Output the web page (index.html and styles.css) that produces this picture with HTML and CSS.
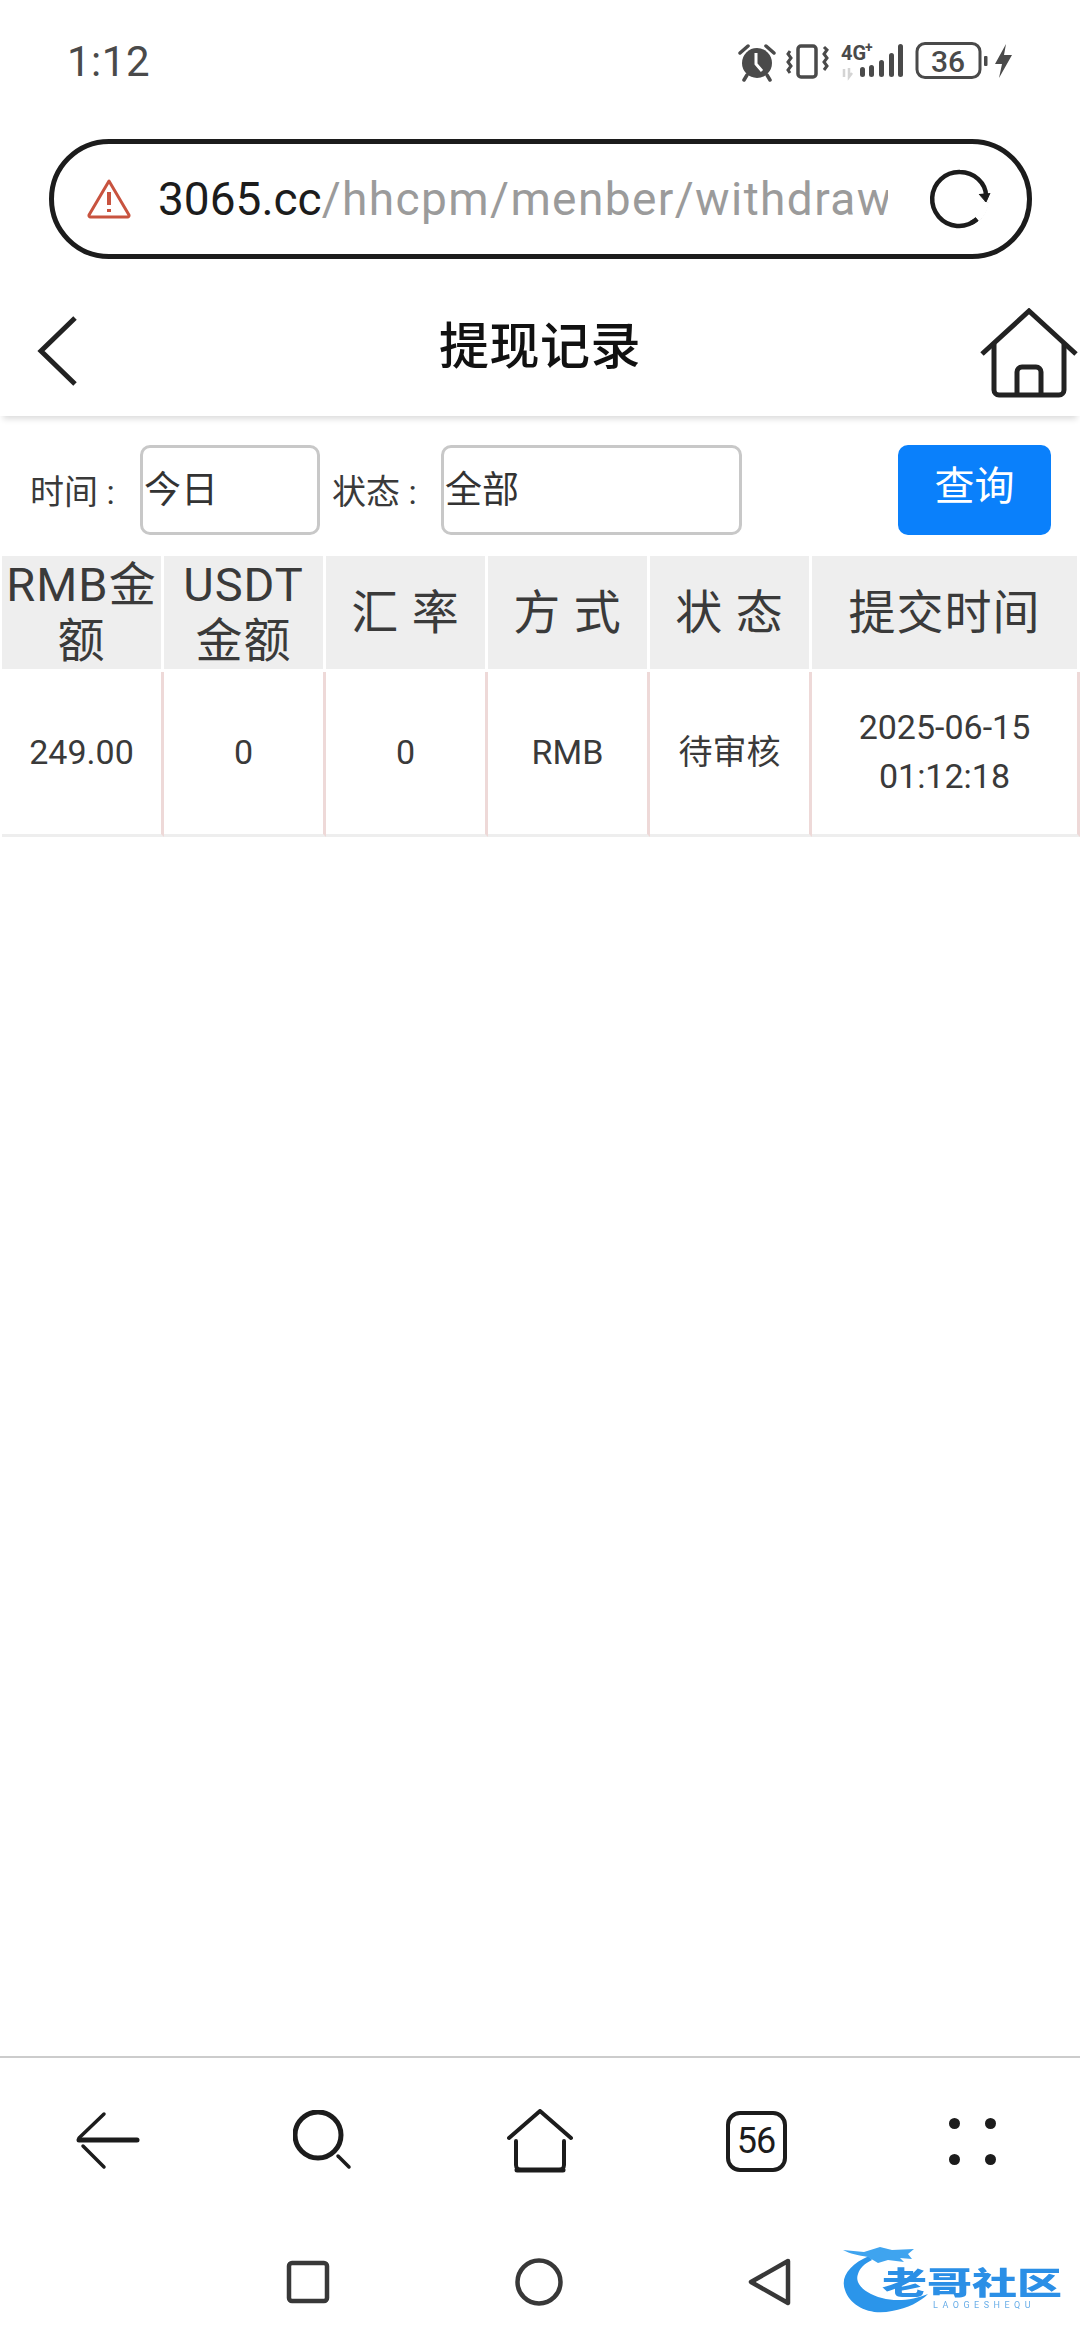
FILE: index.html
```html
<!DOCTYPE html>
<html lang="zh-CN">
<head>
<meta charset="utf-8">
<title>提现记录</title>
<link rel="stylesheet" href="styles.css">
</head>
<body>
<div class="phone">
  <div class="statusbar">
    <span class="time">1:12</span>
    <svg class="status-icons" width="282" height="40" viewBox="735 42 282 40">
      <g fill="#4a4a4a" stroke="#4a4a4a">
        <circle cx="757" cy="63" r="15" stroke="none"/>
        <path d="M740 53l8-7M774 53l-8-7M747 75l-3 5M767 75l3 5" fill="none" stroke-width="3.500" stroke-linecap="round"/>
        <path d="M756 53v11l6 7" fill="none" stroke="#fff" stroke-width="3"/>
        <rect x="798" y="46" width="18" height="31" rx="3" fill="none" stroke-width="3.500"/>
        <path d="M790 51l-2 3 3 4-3 4 3 4-3 4 2 3M824 47l3 3-3 4 3 4-3 4 3 4-3 4" fill="none" stroke-width="3"/>
        <path d="M844 69v8M849 68v9l3-4" fill="none" stroke="#d4d4d4" stroke-width="2.500"/>
        <rect x="860" y="67" width="5" height="10" rx="2.500" stroke="none"/>
        <rect x="869" y="65" width="5" height="12" rx="2.500" stroke="none"/>
        <rect x="879" y="60" width="5" height="17" rx="2.500" stroke="none"/>
        <rect x="889" y="53" width="5" height="24" rx="2.500" stroke="none"/>
        <rect x="898" y="44" width="5" height="33" rx="2.500" stroke="none"/>
        <rect x="917" y="43.500" width="63" height="34" rx="8" fill="none" stroke-width="3"/>
        <rect x="984" y="56" width="3.500" height="10" rx="1" stroke="none"/>
        <path d="M1006 44l-11 20h7l-3 14 13-23h-8z" stroke="none"/>
      </g>
      <text class="st-net" x="841" y="60">4G</text>
      <text class="st-plus" x="865" y="52">+</text>
      <text class="st-batt" x="948" y="72" text-anchor="middle">36</text>
    </svg>
  </div>

  <div class="urlrow">
    <div class="urlbar">
      <svg class="warn" width="46" height="42" viewBox="0 0 46 42" fill="none" stroke="#c8533f" stroke-width="3">
        <path d="M23 3L3 37a1.500 1.500 0 0 0 1.500 2h37a1.500 1.500 0 0 0 1.500-2z" stroke-linejoin="round"/>
        <path d="M23 14v13M23 31v3" stroke-width="4"/>
      </svg>
      <span class="url"><span class="url-host">3065.cc</span><span class="url-path">/hhcpm/menber/withdraw</span></span>
      <svg class="reload" width="62" height="62" viewBox="0 0 62 62" fill="none" stroke="#1c1c1c" stroke-width="4.500">
        <path d="M57 34A27 27 0 1 1 31 4c14 0 26 11 26 24"/>
        <path d="M50 26l7 8 4-9" fill="#1c1c1c" stroke-width="1"/>
        <path d="M57 34a27 27 0 0 1-9 17" stroke="#fff" stroke-width="6"/>
        <path d="M48 51a27 27 0 0 1-6 4"/>
      </svg>
    </div>
  </div>

  <header class="pagehead">
    <svg class="back" width="44" height="70" viewBox="0 0 44 70" fill="none" stroke="#222" stroke-width="5"><path d="M39 2L5 35l34 33"/></svg>
    <h1 class="title">提现记录</h1>
    <svg class="homeicon" width="98" height="90" viewBox="0 0 98 90" fill="none" stroke="#222" stroke-width="5">
      <path d="M2 46L49 3l47 43"/>
      <path d="M14 36v46a5 5 0 0 0 5 5h60a5 5 0 0 0 5-5V36"/>
      <path d="M37 87V64a5 5 0 0 1 5-5h14a5 5 0 0 1 5 5v23"/>
    </svg>
  </header>

  <main class="content">
    <form class="filters">
      <label class="flabel">时间 :</label>
      <div class="field field-time">今日</div>
      <label class="flabel flabel-2">状态 :</label>
      <div class="field field-state">全部</div>
      <button type="button" class="query">查询</button>
    </form>
    <div class="records">
      <div class="hcell">RMB金额</div>
      <div class="hcell">USDT金额</div>
      <div class="hcell">汇 率</div>
      <div class="hcell">方 式</div>
      <div class="hcell">状 态</div>
      <div class="hcell">提交时间</div>
      <div class="dcell">249.00</div>
      <div class="dcell">0</div>
      <div class="dcell">0</div>
      <div class="dcell">RMB</div>
      <div class="dcell">待审核</div>
      <div class="dcell">2025-06-15<br>01:12:18</div>
    </div>
  </main>

  <nav class="browsernav">
    <svg width="64" height="60" viewBox="0 0 64 60" fill="none" stroke="#1c1c1c" stroke-linecap="round"><path d="M3 29h58" stroke-width="5"/><path d="M28 3L3 27M28 56L7 35" stroke-width="3.500"/></svg>
    <svg width="62" height="62" viewBox="0 0 62 62" fill="none" stroke="#1c1c1c" stroke-linecap="round"><circle cx="25" cy="25" r="23" stroke-width="5"/><path d="M45 46l11 11" stroke-width="3.500"/></svg>
    <svg width="66" height="64" viewBox="0 0 66 64" fill="none" stroke="#1c1c1c" stroke-linecap="round" stroke-linejoin="round"><path d="M2 29L33 2l31 27" stroke-width="4"/><path d="M9 32v24a5 5 0 0 0 5 5h38a5 5 0 0 0 5-5V32" stroke-width="4"/><path d="M10 61h46" stroke-width="5"/></svg>
    <div class="tabs">56</div>
    <div class="dots"><i></i><i></i><i></i><i></i></div>
  </nav>

  <div class="sysnav">
    <svg width="44" height="44" viewBox="0 0 44 44" fill="none" stroke="#383838" stroke-width="4.500"><rect x="3" y="3" width="38" height="38" rx="3"/></svg>
    <svg width="48" height="48" viewBox="0 0 48 48" fill="none" stroke="#383838" stroke-width="4.500"><circle cx="24" cy="24" r="21.500"/></svg>
    <svg class="sys-back" width="44" height="48" viewBox="0 0 44 48" fill="none" stroke="#383838" stroke-width="4.500" stroke-linejoin="round"><path d="M40 3L3 24l37 21z"/></svg>
    <div class="logo">
      <svg class="dragon" width="130" height="76" viewBox="0 0 130 76" fill="none">
        <path d="M27 16C8 24-2 37 3 50c5 16 25 26 47 21 16-3 28-9 36-17-14 6-32 8-46 4C24 54 12 44 16 34c2-6 6-10 14-14z" fill="#2b95ea"/>
        <path d="M1 10l21 2 16-5 12 3 22-1-6 5 4 5-12-1 4 4-16-2-10 3-10-6C16 15 8 14 1 10z" fill="#3fa4ef"/>
      </svg>
      <span class="logo-cn">老哥社区</span>
      <span class="logo-en">LAOGESHEQU</span>
    </div>
  </div>
</div>
</body>
</html>
```

FILE: styles.css
```css
* { box-sizing: border-box; }
html, body { margin: 0; padding: 0; background: #fff; }
body { font-family: Roboto, "Noto Sans CJK SC", sans-serif; color: #333; }
.phone { width: 1080px; height: 2340px; display: flex; flex-direction: column; position: relative; overflow: hidden; }

.statusbar { height: 139px; padding: 0 65px 16px 67px; flex: none; display: flex; align-items: center; justify-content: space-between; }
.time { font-size: 42px; color: #4a4a4a; letter-spacing: 0.5px; }
.status-icons { display: block; margin-right: -2px; }
.st-net { font: 700 20px Roboto, sans-serif; fill: #4a4a4a; }
.st-plus { font: 700 14px Roboto, sans-serif; fill: #4a4a4a; }
.st-batt { font: 500 30px Roboto, sans-serif; fill: #4a4a4a; }

.urlrow { padding: 0 48px 0 49px; flex: none; }
.urlbar { height: 120px; border: 5px solid #1c1c1c; border-radius: 60px; display: flex; align-items: center; padding: 0 0 0 32px; }
.warn { flex: none; }
.url { font-size: 46px; color: #9b9b9b; margin-left: 26px; width: 730px; white-space: nowrap; overflow: hidden; flex: none; }
.url-host { color: #1c1c1c; }
.url-path { letter-spacing: 1.400px; }
.reload { margin-left: 41px; flex: none; }

.pagehead { height: 157px; flex: none; display: grid; grid-template-columns: 1fr auto 1fr; align-items: center; padding-top: 18px; box-shadow: 0 6px 6px -3px rgba(0,0,0,.14); position: relative; }
.title { margin: 0; font-size: 50px; font-weight: 500; color: #111; line-height: 1; letter-spacing: 0.500px; }
.back { margin: 8px 0 0 36px; }
.homeicon { justify-self: end; margin: 12px 2px 0 0; }

.content { flex: 1; min-height: 0; display: flex; flex-direction: column; padding-top: 29px; }
.filters { display: flex; align-items: center; height: 90px; padding: 0 29px 0 30px; flex: none; }
.flabel { font-size: 34px; width: 110px; flex: none; color: #3a3a3a; white-space: nowrap; padding-bottom: 2px; }
.flabel-2 { margin-left: 12px; width: 109px; }
.field { height: 90px; border: 3px solid #c8c8c8; border-radius: 10px; font-size: 37px; color: #333; padding: 0 0 6px 1px; display: flex; align-items: center; flex: none; }
.field-time { width: 180px; }
.field-state { width: 301px; }
.query { margin-left: auto; width: 153px; height: 90px; border: 0; border-radius: 10px; background: #0a80fb; color: #fff; font: 400 40px/1 Roboto, "Noto Sans CJK SC", sans-serif; padding: 0 0 6px; }

.records { margin-top: 21px; display: grid; grid-template-columns: repeat(5, 162px) 1fr; padding-left: 2px; }
.hcell { height: 113px; margin-right: 3px; background: #eee; font-size: 47px; letter-spacing: 1px; line-height: 56px; color: #3a3a3a; text-align: center; display: flex; align-items: center; justify-content: center; }
.dcell { height: 165px; margin-top: 3px; padding-bottom: 2px; border-right: 3px solid #eed9d8; border-bottom: 3px solid #eee; font-size: 34px; line-height: 49px; color: #3a3a3a; text-align: center; display: flex; align-items: center; justify-content: center; }

.browsernav { flex: none; height: 168px; border-top: 2px solid #ccc; display: grid; grid-template-columns: repeat(5, 216px); justify-items: center; align-items: center; }
.tabs { width: 61px; height: 61px; border: 4px solid #1c1c1c; border-radius: 14px; font-size: 36px; color: #1c1c1c; display: flex; align-items: center; justify-content: center; line-height: 1; letter-spacing: -1px; }
.dots { width: 47px; height: 47px; display: grid; grid-template-columns: 11px 11px; grid-template-rows: 11px 11px; justify-content: space-between; align-content: space-between; }
.dots i { display: block; background: #1c1c1c; border-radius: 50%; }

.sysnav { flex: none; height: 116px; display: flex; align-items: center; justify-content: center; gap: 185px; padding: 0 3px 0 0; }
.sys-back { margin-left: 0; }
.logo { position: absolute; left: 842px; top: 2240px; width: 225px; height: 76px; filter: blur(0.5px); }
.dragon { position: absolute; left: 0; top: 0; }
.logo-cn { position: absolute; left: 40px; top: 26px; font: 900 45px/30px "Noto Sans CJK SC", sans-serif; color: #2b8fe6; white-space: nowrap; transform: scaleY(.68); transform-origin: left center; }
.logo-en { position: absolute; left: 91px; top: 60px; font: 400 9px/11px Roboto, sans-serif; color: #6aaee8; letter-spacing: 4.500px; white-space: nowrap; }
```
